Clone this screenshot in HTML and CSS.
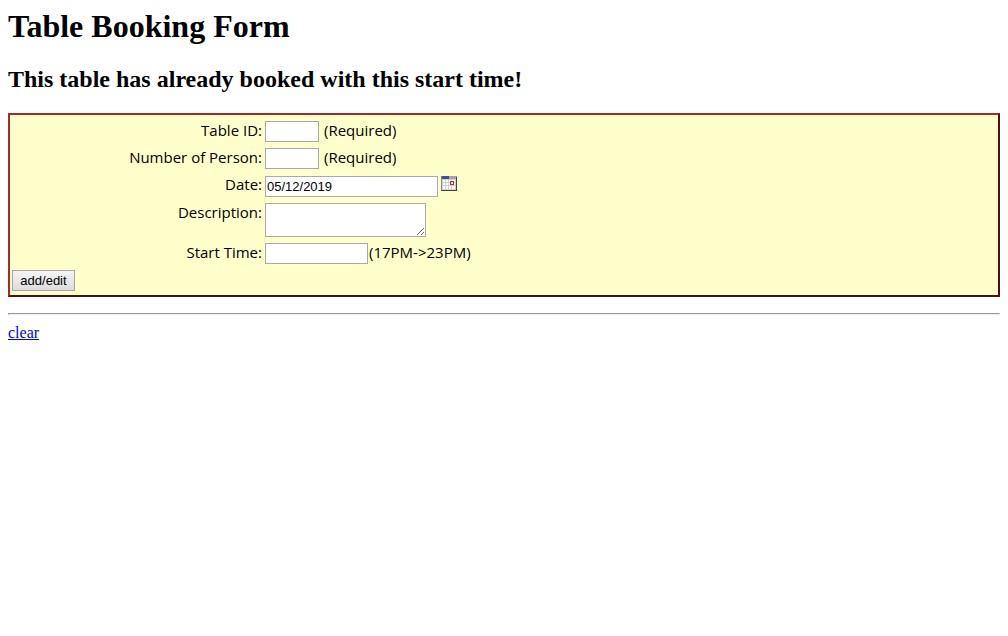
FILE: index.html
```
<!DOCTYPE html>
<html lang="en">
<head>
<meta charset="utf-8">
<title>Table Booking Form</title>
<link rel="stylesheet" href="styles.css">
</head>
<body>
<h1 class="title">Table Booking Form</h1>
<h2 class="message">This table has already booked with this start time!</h2>
<form class="booking">
  <div class="row">
    <label class="label" for="table-id">Table ID:</label>
    <div class="field spaced"><input class="box short" id="table-id" type="text"><span>(Required)</span></div>
  </div>
  <div class="row">
    <label class="label" for="persons">Number of Person:</label>
    <div class="field spaced"><input class="box short" id="persons" type="text"><span>(Required)</span></div>
  </div>
  <div class="row date-row">
    <label class="label" for="date">Date:</label>
    <div class="field dated"><input class="box date" id="date" type="text" value="05/12/2019">
      <button class="picker" type="button" aria-label="Pick a date">
        <svg width="16" height="15" viewBox="0 0 16 15" shape-rendering="crispEdges" aria-hidden="true">
          <path fill="#d2d2d2" d="M0 0h16v15H0z"/>
          <path fill="#fff" d="M2 4h2v2H2zM5 4h2v2H5zM8 4h2v2H8zM11 4h3v2h-3zM2 7h2v2H2zM5 7h2v2H5zM8 7h2v2H8zM11 7h3v2h-3zM2 10h2v3H2zM5 10h2v3H5zM8 10h2v3H8zM11 10h3v3h-3z"/>
          <path fill="#a5a5a5" d="M8 0h8v3H8z"/>
          <path fill="none" stroke="#a83434" d="M9.500 5.500h3v3h-3z"/>
          <path fill="#888" d="M0 0h1v15H0z"/>
          <path fill="#444bab" d="M1 0h7v3H1z"/>
          <path fill="#444" d="M15 1h1v14h-1zM0 14h16v1H0z"/>
        </svg>
      </button>
    </div>
  </div>
  <div class="row">
    <label class="label" for="description">Description:</label>
    <div class="field"><textarea class="box area" id="description"></textarea></div>
  </div>
  <div class="row">
    <label class="label" for="start">Start Time:</label>
    <div class="field timed"><input class="box time" id="start" type="text"><span>(17PM-&gt;23PM)</span></div>
  </div>
  <button class="submit" type="submit">add/edit</button>
</form>
<hr class="rule">
<a class="clear" href="#">clear</a>
</body>
</html>
```
FILE: styles.css
```
body {
  margin: 8px;
  background: #fff;
  color: #000;
  font: 16px/18px "Liberation Serif", "Times New Roman", serif;
}
.title {
  margin: 0 0 21px;
  font-size: 32px;
  line-height: 37px;
}
.message {
  margin: 0 0 20px;
  font-size: 24px;
  line-height: 27px;
}
.booking {
  display: flex;
  flex-direction: column;
  align-items: flex-start;
  gap: 6px;
  padding: 6px 2px 4px;
  border: 2px solid;
  border-color: #a52a2a #4f1010 #4f1010 #a52a2a;
  background: #ffffcc;
  font: 15px/18px "Trebuchet MS", "Open Sans", sans-serif;
}
.row {
  display: grid;
  grid-template-columns: 250px auto;
  gap: 3px;
  align-items: start;
}
.date-row {
  padding-top: 1px;
}
.date-row .label {
  margin-top: -1px;
}
.label {
  text-align: right;
}
.field {
  display: flex;
  align-items: flex-start;
}
.spaced {
  gap: 5px;
}
.timed {
  gap: 1px;
}
.dated {
  gap: 3px;
}
.box {
  box-sizing: border-box;
  height: 21px;
  margin: 0;
  padding: 1px;
  border: 1px solid #a9a9a9;
  border-radius: 0;
  background: #fff;
  color: #000;
  font: 13px/16px "Liberation Sans", Arial, sans-serif;
}
.short {
  width: 54px;
}
.date {
  width: 173px;
}
.area {
  width: 161px;
  height: 34px;
}
.time {
  width: 103px;
}
.picker {
  display: flex;
  padding: 0;
  border: 0;
  background: none;
}
.submit {
  height: 21px;
  min-width: 63px;
  padding: 0 7px;
  border: 1px solid #a6a6a6;
  border-radius: 0;
  background: linear-gradient(#f4f4f4, #dddddd);
  color: #000;
  font: 13px/16px "Liberation Sans", Arial, sans-serif;
}
.rule {
  margin: 16px 0 9px;
  border: 1px solid;
  border-color: #9a9a9a #eee #eee #9a9a9a;
}
.clear {
  color: #0000ee;
}
```
